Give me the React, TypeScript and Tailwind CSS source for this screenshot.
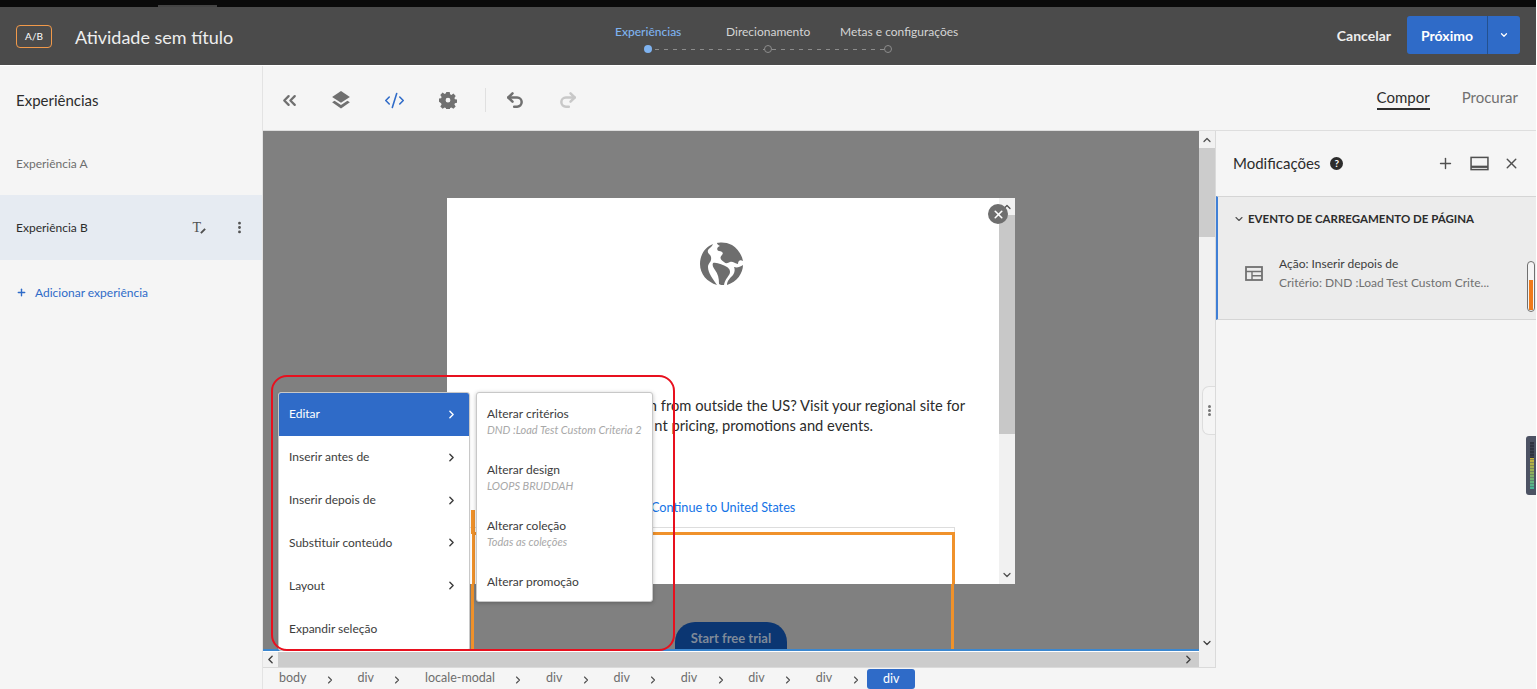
import { ChevronDown, ChevronLeft, ChevronRight, ChevronUp, ChevronsLeft, Plus, X, MoreVertical, Undo2, Redo2, Code2 } from 'lucide-react'

const FONT = "font-['Lato','Noto_Sans',sans-serif]"

// ---------------------------------------------------------------------------
// Small drawn icons
// ---------------------------------------------------------------------------

function LayersIcon() {
  return (
    <svg viewBox="0 0 18 18" className="w-[20px] h-[20px] text-[#707070]" fill="currentColor">
      <path d="M9 1l8 5.200-8 5.200-8-5.200z" />
      <path d="M3.200 9.600L9 13.400l5.800-3.800L17 11l-8 5.600L1 11z" />
    </svg>
  )
}

function GearIcon() {
  return (
    <svg viewBox="0 0 18 18" className="w-[18px] h-[18px] text-[#707070]" fill="currentColor">
      <path
        fillRule="evenodd"
        d="M7.300 1h3.400l.4 2.300 1.300.6 2-1.300 2.300 2.400-1.300 1.900.5 1.300 2.100.4v3.200l-2.100.4-.5 1.300 1.300 1.900-2.300 2.400-2-1.300-1.300.6-.4 2.200H7.300l-.4-2.200-1.300-.6-2 1.300-2.300-2.400 1.300-1.900-.5-1.300L0 10.800V7.600l2.100-.4.5-1.300-1.300-1.900 2.300-2.400 2 1.300 1.300-.6zM9 6.800a2.400 2.400 0 100 4.800 2.400 2.400 0 000-4.800z"
      />
    </svg>
  )
}

function Globe() {
  return (
    <svg viewBox="0 0 44 44" className="w-[44px] h-[44px]" fill="#6e6e6e">
      <path d="M13 2C5 5 0 13 0 22C0 32 7 40 17 43C13 37 8 31 8 25C8 21 12 20 11 15C10 11 7 12 8 8C9 6 12 5 13 2Z" />
      <path d="M17 1C20 0 27 0 32 3C38 7 42 13 43 19C40 17 38 19 38 22C35 22 33 19 30 20C28 21 26 22 24 20C21 18 19 16 22 13C24 11 22 9 19 9C16 8 17 5 20 4C18 3 17 2 17 1Z" />
      <path d="M13 21C17 20 23 23 27 25C30 27 31 30 29 33C27 36 25 38 24 43C22 43 20 43 19 42C19 36 18 32 15 28C13 25 12 23 13 21Z" />
      <path d="M34 25C37 26 40 25 43 23C43 31 37 40 27 43C27 39 30 36 33 33C35 30 35 27 34 25Z" />
    </svg>
  )
}

// ---------------------------------------------------------------------------
// Data
// ---------------------------------------------------------------------------

const MENU = [
  { label: 'Editar', arrow: true, active: true },
  { label: 'Inserir antes de', arrow: true },
  { label: 'Inserir depois de', arrow: true },
  { label: 'Substituir conteúdo', arrow: true },
  { label: 'Layout', arrow: true },
  { label: 'Expandir seleção', arrow: false },
]

const SUBMENU = [
  { label: 'Alterar critérios', hint: 'DND :Load Test Custom Criteria 2' },
  { label: 'Alterar design', hint: 'LOOPS BRUDDAH' },
  { label: 'Alterar coleção', hint: 'Todas as coleções' },
  { label: 'Alterar promoção' },
]

const CRUMBS = ['body', 'div', 'locale-modal', 'div', 'div', 'div', 'div', 'div']

// ---------------------------------------------------------------------------
// Header
// ---------------------------------------------------------------------------

function Header() {
  return (
    <header className="h-[58px] shrink-0 bg-[#4b4b4b] flex items-center pl-4 pr-[16px] relative">
      <div className="w-[36px] h-[23px] rounded-[4px] border-[1.5px] border-[#f0994a] flex items-center justify-center text-[10px] text-white">
        A/B
      </div>
      <span className="ml-[23px] text-[18px] text-[#eeeeee] leading-none mt-[2px]">Atividade sem título</span>

      {/* wizard steps */}
      <div className="absolute left-[615px] top-[17px] w-[342px] h-[32px]">
        <span className="absolute left-0 top-0 text-[12px] leading-4 font-medium text-[#7fb3f0] whitespace-nowrap">Experiências</span>
        <span className="absolute left-[111px] top-0 text-[12px] leading-4 text-[#d5d5d5] whitespace-nowrap">Direcionamento</span>
        <span className="absolute left-[225px] top-0 text-[12px] leading-4 text-[#d5d5d5] whitespace-nowrap">Metas e configurações</span>
        <div className="absolute left-[40px] right-[72px] top-[25px] h-px bg-[repeating-linear-gradient(to_right,#8c8c8c_0_4px,transparent_4px_9px)]" />
        <span className="absolute left-[29px] top-[21px] w-[8px] h-[8px] rounded-full bg-[#7fb3f0]" />
        <span className="absolute left-[149px] top-[21px] w-[8px] h-[8px] rounded-full border-[1.5px] border-[#8c8c8c] bg-[#4b4b4b]" />
        <span className="absolute left-[269px] top-[21px] w-[8px] h-[8px] rounded-full border-[1.5px] border-[#8c8c8c] bg-[#4b4b4b]" />
      </div>

      <div className="ml-auto flex items-center mb-[2px]">
        <span className="text-[14px] font-bold text-[#eeeeee] mr-[16px]">Cancelar</span>
        <div className="flex h-[38px] rounded-[3px] overflow-hidden bg-[#2f6bc8] text-white">
          <span className="w-[80px] flex items-center justify-center text-[14px] font-bold">Próximo</span>
          <span className="w-[33px] flex items-center justify-center border-l border-[#24518f]">
            <ChevronDown size={10} strokeWidth={3} />
          </span>
        </div>
      </div>
    </header>
  )
}

// ---------------------------------------------------------------------------
// Left sidebar
// ---------------------------------------------------------------------------

function Sidebar() {
  return (
    <aside className="w-[263px] shrink-0 bg-[#f5f5f5] border-r border-[#e3e3e3] flex flex-col">
      <div className="h-[65px] flex items-center pl-4 pt-[4px] text-[15px] text-[#2c2c2c]">Experiências</div>
      <div className="h-[64px] flex items-center pl-4 pt-[1px] text-[12px] text-[#6e6e6e]">Experiência A</div>
      <div className="h-[65px] flex items-center pl-4 pr-[15px] text-[12px] text-[#2c2c2c] bg-[#e6ebf2]">
        <span>Experiência B</span>
        <span className="ml-auto mr-[31px] font-['Liberation_Serif',serif] text-[14px] leading-none text-[#505050] relative">
          T
          <span className="absolute left-[8px] top-[9px] w-[6px] h-[2px] bg-[#505050] -rotate-45" />
        </span>
        <MoreVertical size={15} strokeWidth={2.5} className="text-[#505050]" />
      </div>
      <div className="h-[65px] flex items-center pl-4 text-[12px] text-[#2f6bc8]">
        <Plus size={11} strokeWidth={3} className="mr-[8px]" />
        Adicionar experiência
      </div>
    </aside>
  )
}

// ---------------------------------------------------------------------------
// Toolbar above the canvas
// ---------------------------------------------------------------------------

function Toolbar() {
  return (
    <div className="h-[65px] shrink-0 bg-[#f5f5f5] border-b border-[#dedede] flex items-center pl-[16px] pr-[18px]">
      <div className="flex items-center mt-[4px]">
        <ChevronsLeft size={21} strokeWidth={2.6} className="text-[#707070]" />
        <div className="w-[31px]" />
        <LayersIcon />
        <div className="w-[33px]" />
        <Code2 size={21} strokeWidth={1.8} className="text-[#2f6bc8]" />
        <div className="w-[34px]" />
        <GearIcon />
        <div className="w-[28px]" />
        <div className="w-px h-[24px] bg-[#e0e0e0]" />
        <div className="w-[19px]" />
        <Undo2 size={20} strokeWidth={3} className="text-[#707070]" />
        <div className="w-[33px]" />
        <Redo2 size={20} strokeWidth={3} className="text-[#c8c8c8]" />
      </div>
      <div className="ml-auto flex items-center gap-[32px] text-[15px]">
        <span className="text-[#2c2c2c] border-b-2 border-[#2c2c2c] leading-[22px]">Compor</span>
        <span className="text-[#707070] leading-[22px] pb-[2px]">Procurar</span>
      </div>
    </div>
  )
}

// ---------------------------------------------------------------------------
// Page shown in the canvas, with the modal on top
// ---------------------------------------------------------------------------

function PagePreview() {
  return (
    <>
      {/* orange selection over the dimmed page */}
      <div className="absolute left-[208px] top-[402px] w-[483px] h-[130px] border-[3px] border-[#f0922b]" />
      <div className="absolute left-[412px] top-[491px] w-[112px] h-[40px] rounded-t-[20px] bg-[#0b3672] text-center text-[13px] font-bold leading-[33px] text-[#7f8a99]">
        Start free trial
      </div>
      <div className="absolute left-0 right-0 bottom-0 h-[2px] bg-[#3b87cf]" />

      {/* locale modal */}
      <div className="absolute left-[184px] top-[67px] w-[568px] h-[386px] bg-white overflow-hidden">
        <div className="absolute left-[253px] top-[44px]">
          <Globe />
        </div>
        <p className="absolute right-[50px] top-[197px] whitespace-nowrap text-[14.7px] leading-[20px] text-[#2c2c2c]">
          n from outside the US? Visit your regional site for
        </p>
        <p className="absolute right-[142px] top-[217px] whitespace-nowrap text-[14.7px] leading-[20px] text-[#2c2c2c]">
          nt pricing, promotions and events.
        </p>
        <span className="absolute left-[204px] top-[300px] whitespace-nowrap text-[12.7px] leading-[18px] text-[#1473e6]">
          Continue to United States
        </span>
        <div className="absolute left-[8px] top-[329px] w-[500px] h-[70px] border border-[#dddddd]" />
        <div className="absolute left-[25px] top-[334px] w-[483px] h-[70px] border-[3px] border-[#f0922b]" />
        <div className="absolute left-[24px] top-[312px] w-[4px] h-[24px] bg-[#f0922b]" />

        {/* modal scrollbar */}
        <div className="absolute right-0 top-0 bottom-0 w-[16px] bg-[#f1f1f1] flex flex-col items-center">
          <ChevronUp size={12} strokeWidth={2.5} className="mt-[3px] text-[#505050]" />
          <div className="w-full h-[219px] mt-[2px] bg-[#c8c8c8]" />
          <ChevronDown size={12} strokeWidth={2.5} className="mt-auto mb-[3px] text-[#505050]" />
        </div>
        <div className="absolute right-[7px] top-[6px] w-[20px] h-[20px] rounded-full bg-[#6e6e6e] flex items-center justify-center text-white">
          <X size={13} strokeWidth={3} />
        </div>
      </div>
    </>
  )
}

// ---------------------------------------------------------------------------
// Context menu + submenu + red annotation
// ---------------------------------------------------------------------------

function ContextMenu() {
  return (
    <>
      <div className="absolute left-[15px] top-[261px] w-[192px] h-[259px] bg-white rounded-[3px] border border-[#c8c8c8] overflow-hidden flex flex-col shadow-sm">
        {MENU.map((m) => (
          <div
            key={m.label}
            className={`flex-1 flex items-center justify-between pl-[10px] pr-[11px] text-[12px] ${
              m.active ? 'bg-[#2f6bc8] text-white' : 'text-[#3c3c3c]'
            }`}
          >
            <span>{m.label}</span>
            {m.arrow && <ChevronRight size={13} strokeWidth={2.6} />}
          </div>
        ))}
      </div>

      <div className="absolute left-[213px] top-[261px] w-[177px] h-[210px] bg-white rounded-[3px] border border-[#c8c8c8] shadow-[0_1px_4px_rgba(0,0,0,0.25)] flex flex-col pl-[10px] pt-[12px]">
        {SUBMENU.map((s) => (
          <div key={s.label} className="h-[56px] shrink-0">
            <div className="text-[12px] leading-[17px] text-[#3c3c3c] whitespace-nowrap">{s.label}</div>
            {s.hint && (
              <div className="text-[11px] leading-[16px] italic text-[#a8a8a8] whitespace-nowrap">{s.hint}</div>
            )}
          </div>
        ))}
      </div>

      <div className="absolute left-[8px] top-[244px] w-[404px] h-[276px] rounded-[16px] border-2 border-[#e8101e]" />
    </>
  )
}

// ---------------------------------------------------------------------------
// Right panel
// ---------------------------------------------------------------------------

function ModificationsPanel() {
  return (
    <aside className="w-[320px] shrink-0 bg-[#f5f5f5] relative">
      <div className="h-[65px] flex items-center pl-[17px] pr-[16px]">
        <span className="text-[15px] text-[#2c2c2c]">Modificações</span>
        <span className="ml-[10px] w-[13px] h-[13px] rounded-full bg-[#2c2c2c] text-white text-[10px] font-bold leading-[13px] text-center">?</span>
        <Plus size={17} strokeWidth={2} className="ml-auto text-[#505050]" />
        <svg viewBox="0 0 20 16" className="w-[19px] h-[15px] ml-[16px] text-[#505050]" fill="none" stroke="currentColor" strokeWidth="1.6">
          <rect x="1" y="1.500" width="18" height="13" />
          <path d="M1 11.500h18" strokeWidth="2.400" />
        </svg>
        <X size={17} strokeWidth={2} className="ml-[14px] text-[#505050]" />
      </div>
      <div className="h-[124px] bg-[#ececec] border-y border-[#d5d5d5] border-l-2 border-l-[#3f7fd6] relative">
        <div className="h-[43px] flex items-center pl-[15px] text-[11.5px] font-bold text-[#2c2c2c]">
          <ChevronDown size={12} strokeWidth={2.2} className="mr-[3px] text-[#505050]" />
          EVENTO DE CARREGAMENTO DE PÁGINA
        </div>
        <div className="flex items-center pl-[27px] mt-[14px]">
          <svg viewBox="0 0 18 15" className="w-[18px] h-[15px] text-[#707070]" fill="none" stroke="currentColor" strokeWidth="1.800">
            <rect x="1" y="1" width="16" height="13" />
            <path d="M1 5.500h16M7 5.500v8.500M7 9.700h10" strokeWidth="1.400" />
          </svg>
          <div className="ml-[16px]">
            <div className="text-[12px] leading-[19px] text-[#3c3c3c]">Ação: Inserir depois de</div>
            <div className="text-[12px] leading-[19px] text-[#707070]">Critério: DND :Load Test Custom Crite...</div>
          </div>
        </div>
        <div className="absolute right-[1px] top-[64px] w-[8px] h-[51px] rounded-[4px] border border-[#707070] bg-[#f5f5f5] overflow-hidden flex flex-col justify-end">
          <div className="h-[30px] w-[4px] mx-auto mb-[1px] bg-[#f07a1a]" />
        </div>
      </div>

      {/* meter widget at the window edge */}
      <div className="absolute right-0 top-[305px] w-[10px] h-[59px] rounded-l-[3px] bg-[#4c5263] flex justify-end pr-[2px] py-[6px]">
        <div className="w-[4px] h-full bg-[linear-gradient(to_bottom,#2f3340_0%,#2f3340_33%,#c9b23a_34%,#8fb05a_65%,#45b59a_100%)]">
          <div className="w-full h-full bg-[repeating-linear-gradient(to_bottom,transparent_0_2px,rgba(76,82,99,0.45)_2px_3px)]" />
        </div>
      </div>
    </aside>
  )
}

// ---------------------------------------------------------------------------
// Main
// ---------------------------------------------------------------------------

export default function App() {
  return (
    <div className={`${FONT} w-[1536px] h-[689px] overflow-hidden flex flex-col bg-[#f5f5f5] relative`}>
      <div className="h-[7px] shrink-0 bg-[#0a0a0a] relative">
        <div className="absolute left-[158px] bottom-0 w-[59px] h-[2px] bg-[#444444]" />
      </div>
      <Header />
      <div className="h-px shrink-0 bg-white" />
      <div className="flex-1 min-h-0 flex">
        <Sidebar />
        <main className="flex-1 min-w-0 flex flex-col">
          <Toolbar />
          <div className="flex-1 min-h-0 flex">
            <div className="flex-1 min-w-0 flex flex-col">
              <div className="h-[537px] shrink-0 flex border-b border-[#dadada]">
                <div className="flex-1 min-w-0 flex flex-col">
                  <div className="flex-1 min-h-0 relative overflow-hidden bg-[#808080]">
                    <PagePreview />
                    <ContextMenu />
                  </div>
                  {/* horizontal scrollbar */}
                  <div className="h-[16px] shrink-0 bg-[#cccccc] border-t border-white flex items-center justify-between">
                    <span className="w-[15px] h-full bg-[#f1f1f1] flex items-center justify-center">
                      <ChevronLeft size={13} strokeWidth={2.6} className="text-[#404040]" />
                    </span>
                    <span className="w-[15px] h-full flex items-center justify-center mr-[3px]">
                      <ChevronRight size={13} strokeWidth={2.6} className="text-[#404040]" />
                    </span>
                  </div>
                </div>
                {/* vertical scrollbar */}
                <div className="w-[17px] shrink-0 bg-[#f1f1f1] border-r border-[#dadada] flex flex-col items-center relative">
                  <ChevronUp size={12} strokeWidth={2.5} className="mt-[3px] text-[#505050]" />
                  <div className="w-full h-[89px] mt-[2px] bg-[#cccccc]" />
                  <ChevronDown size={12} strokeWidth={2.5} className="mt-auto mb-[18px] text-[#404040]" />
                  <div className="absolute right-0 top-[255px] w-[13px] h-[49px] bg-[#f5f5f5] border border-r-0 border-[#dddddd] rounded-l-[7px] flex flex-col items-center justify-center gap-[1px]">
                    <span className="w-[3px] h-[3px] rounded-full bg-[#777777]" />
                    <span className="w-[3px] h-[3px] rounded-full bg-[#777777]" />
                    <span className="w-[3px] h-[3px] rounded-full bg-[#777777]" />
                  </div>
                </div>
              </div>
              {/* breadcrumb */}
              <div className="flex-1 flex items-center pl-[16px] text-[12.5px] text-[#6e6e6e]">
                {CRUMBS.map((c, i) => (
                  <div key={i} className="flex items-center">
                    <span className="whitespace-nowrap">{c}</span>
                    <ChevronRight size={12} strokeWidth={2.2} className="ml-[17.5px] mr-[21.5px] mt-[2px] text-[#505050]" />
                  </div>
                ))}
                <span className="-ml-[16px] w-[48px] h-[20px] mt-[1px] rounded-[3px] bg-[#2f6bc8] text-white text-center leading-[20px]">div</span>
              </div>
            </div>
            <ModificationsPanel />
          </div>
        </main>
      </div>
    </div>
  )
}
